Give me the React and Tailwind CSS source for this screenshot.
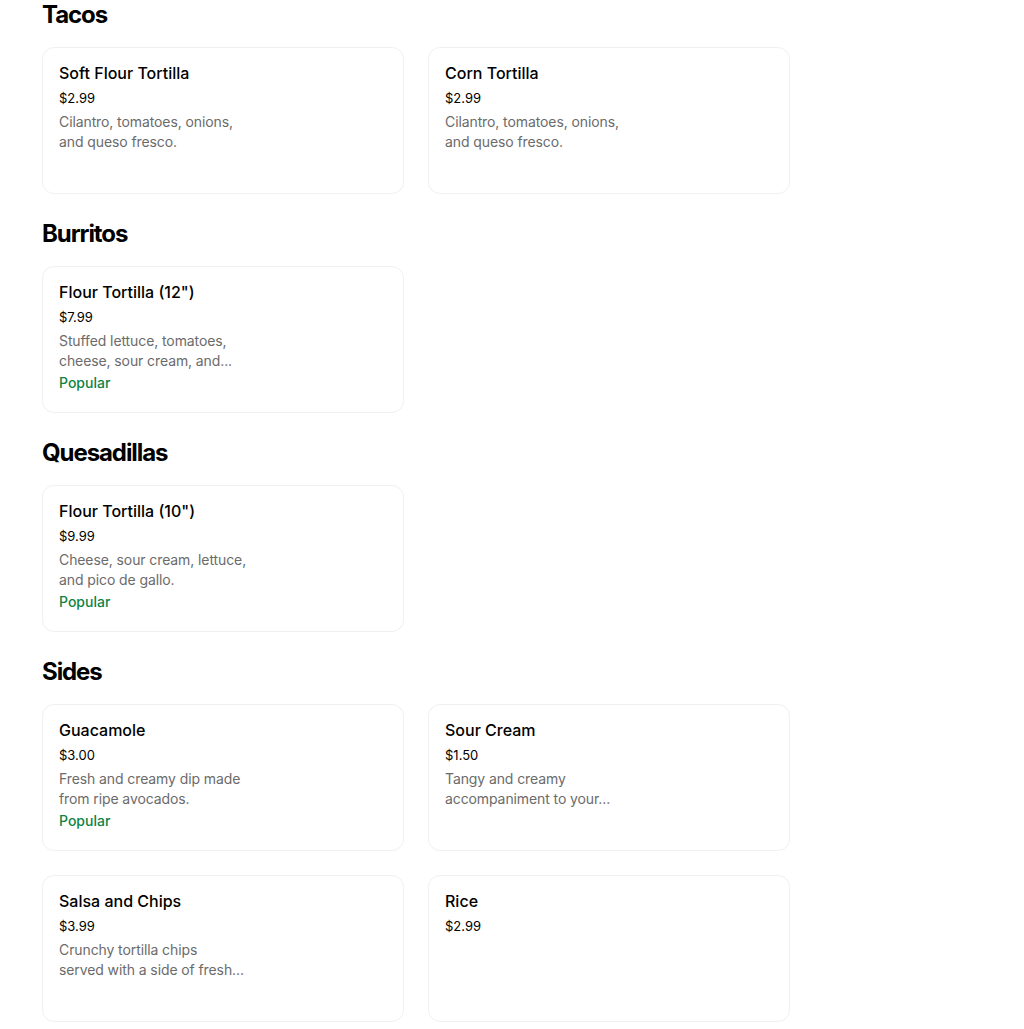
import React from "react";

const sections = [
  {
    title: "Tacos",
    items: [
      { name: "Soft Flour Tortilla", price: "$2.99", desc: ["Cilantro, tomatoes, onions,", "and queso fresco."] },
      { name: "Corn Tortilla", price: "$2.99", desc: ["Cilantro, tomatoes, onions,", "and queso fresco."] },
    ],
  },
  {
    title: "Burritos",
    items: [
      { name: 'Flour Tortilla (12")', price: "$7.99", desc: ["Stuffed lettuce, tomatoes,", "cheese, sour cream, and..."], popular: true },
    ],
  },
  {
    title: "Quesadillas",
    items: [
      { name: 'Flour Tortilla (10")', price: "$9.99", desc: ["Cheese, sour cream, lettuce,", "and pico de gallo."], popular: true },
    ],
  },
  {
    title: "Sides",
    items: [
      { name: "Guacamole", price: "$3.00", desc: ["Fresh and creamy dip made", "from ripe avocados."], popular: true },
      { name: "Sour Cream", price: "$1.50", desc: ["Tangy and creamy", "accompaniment to your..."] },
      { name: "Salsa and Chips", price: "$3.99", desc: ["Crunchy tortilla chips", "served with a side of fresh..."] },
      { name: "Rice", price: "$2.99" },
    ],
  },
];

function ItemCard({ item }) {
  return (
    <div className="h-[147px] rounded-xl border border-[#f0f0f0] bg-white px-4 pt-[15px]">
      <p className="text-base leading-5 font-medium text-black">{item.name}</p>
      <p className="mt-[5px] text-[13px] leading-5 text-black">{item.price}</p>
      {item.desc && (
        <div className="mt-1 text-sm leading-5 tracking-[-0.1px] text-[#6b6b6b]">
          {item.desc.map((line) => (
            <p key={line} className="whitespace-nowrap">{line}</p>
          ))}
        </div>
      )}
      {item.popular && <p className="mt-[2px] text-sm leading-5 font-medium text-[#0e8345]">Popular</p>}
    </div>
  );
}

export default function App() {
  return (
    <div className="min-h-screen bg-white pl-[42px] pt-[3px] pb-10" style={{ fontFamily: "Inter, 'Noto Sans', sans-serif" }}>
      <div className="w-[748px]">
        {sections.map((s, i) => (
          <section key={s.title} className={i === 0 ? "" : "mt-[28px]"}>
            <h2 className="text-2xl leading-6 font-bold tracking-[-0.045em] text-black">{s.title}</h2>
            <div className="mt-[20px] grid grid-cols-2 gap-6">
              {s.items.map((it) => (
                <ItemCard key={it.name} item={it} />
              ))}
            </div>
          </section>
        ))}
      </div>
    </div>
  );
}
